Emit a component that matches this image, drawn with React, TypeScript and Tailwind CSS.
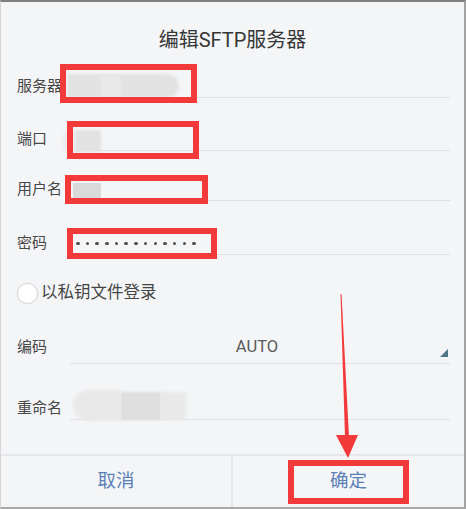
import React from "react";

function Row({ label, mt, children }: { label: string; mt: string; children?: React.ReactNode }) {
  return (
    <div className={`flex items-center h-[24px] pl-[16px] pr-[14px] ${mt}`}>
      <div className="w-[53px] shrink-0 text-[15px] leading-[20px] text-[#474747] whitespace-nowrap">{label}</div>
      <div className="flex-1 h-full border-b border-[#dfe0e3] flex items-center">{children}</div>
    </div>
  );
}

export default function App() {
  const dots = Array.from({ length: 13 });
  return (
    <div className="relative w-[466px] h-[509px] overflow-hidden bg-[#f4f5f7] border-t-2 border-t-[#7f7f7f] border-r-2 border-r-[#a3a3a3] border-b-2 border-b-[#a8a8a8] border-l border-l-[#d6d6d6] flex flex-col font-[Roboto,'Noto_Sans_CJK_SC',sans-serif]">
      <div className="mt-[24px] h-[28px] leading-[28px] text-center text-[20px] text-[#363636]">编辑SFTP服务器</div>

      <Row label="服务器" mt="mt-[20px]" />
      <Row label="端口" mt="mt-[29px]" />
      <Row label="用户名" mt="mt-[26px]" />
      <Row label="密码" mt="mt-[30px]">
        <div className="flex items-center gap-[6.2px] pl-[6px] pt-[2px]">
          {dots.map((_, i) => (
            <span key={i} className="block w-[3.5px] h-[3.5px] rounded-full bg-[#505050]" />
          ))}
        </div>
      </Row>

      <div className="mt-[28px] h-[20px] pl-[16px] flex items-center">
        <span className="block w-[21px] h-[21px] rounded-full bg-white border border-[#d4d5d8] shadow-[0_0_2px_rgba(0,0,0,0.08)]" />
        <span className="ml-[3px] text-[16.5px] leading-[20px] text-[#454545]">以私钥文件登录</span>
      </div>

      <div className="mt-[28px] h-[33px] flex pl-[16px] pr-[14px]">
        <div className="w-[53px] shrink-0 pt-[6px] text-[15px] leading-[20px] text-[#474747]">编码</div>
        <div className="relative flex-1 h-full border-b border-[#dfe0e3] flex justify-center pt-[6px]">
          <span className="text-[16.5px] leading-[20px] text-[#5a5a5a] pr-[6px]">AUTO</span>
          <svg className="absolute right-[2px] bottom-[6px]" width="8" height="8" viewBox="0 0 8 8">
            <polygon points="8,0 8,8 0,8" fill="#4d7686" />
          </svg>
        </div>
      </div>

      <Row label="重命名" mt="mt-[32px]" />

      <div className="mt-auto h-[53px] border-t-2 border-[#e6e7ea] flex">
        <div className="w-[232px] border-r-2 border-[#e4e5e8] flex items-center justify-center text-[18.5px] text-[#5b80b6]">取消</div>
        <div className="flex-1 flex items-center justify-center text-[18.5px] text-[#5b80b6]">确定</div>
      </div>

      {/* redaction blurs */}
      <div className="absolute left-[66px] top-[72px] w-[112px] h-[24px] rounded-r-full bg-[#e2e2e3] blur-[1.5px]" />
      <div className="absolute left-[100px] top-[74px] w-[20px] h-[22px] bg-[#e9e9ea] blur-[1px]" />
      <div className="absolute left-[62px] top-[127px] w-[16px] h-[24px] rounded-full bg-[#ececed] blur-[1.5px]" />
      <div className="absolute left-[75px] top-[128px] w-[25px] h-[22px] bg-[#e2e2e3] blur-[1px]" />
      <div className="absolute left-[72px] top-[181px] w-[28px] h-[16px] bg-[#dadadb] blur-[0.5px]" />
      <div className="absolute left-[72px] top-[388px] w-[48px] h-[31px] rounded-l-full bg-[#e9e9ea] blur-[1.5px]" />
      <div className="absolute left-[120px] top-[390px] w-[40px] h-[28px] bg-[#dedede] blur-[1px]" />
      <div className="absolute left-[160px] top-[390px] w-[25px] h-[28px] bg-[#e9e9ea] blur-[1px]" />

      {/* red annotations */}
      <div className="absolute left-[59px] top-[62px] w-[137px] h-[39px] border-[6px] border-[#f23a3a]" />
      <div className="absolute left-[66px] top-[119px] w-[132px] h-[38px] border-[6px] border-[#f23a3a]" />
      <div className="absolute left-[64px] top-[173px] w-[143px] h-[29px] border-[6px] border-[#f23a3a]" />
      <div className="absolute left-[66px] top-[226px] w-[150px] h-[31px] border-[6px] border-[#f23a3a]" />
      <div className="absolute left-[287px] top-[458px] w-[121px] h-[44px] border-[6px] border-[#f23a3a]" />
      <svg className="absolute left-[-1px] top-[-2px]" width="466" height="509" viewBox="0 0 466 509">
        <polygon points="340.5,294 341.5,294 349,437 345,437" fill="#f23a3a" />
        <polygon points="336,435 358,435 348,458" fill="#f23a3a" />
      </svg>
    </div>
  );
}
